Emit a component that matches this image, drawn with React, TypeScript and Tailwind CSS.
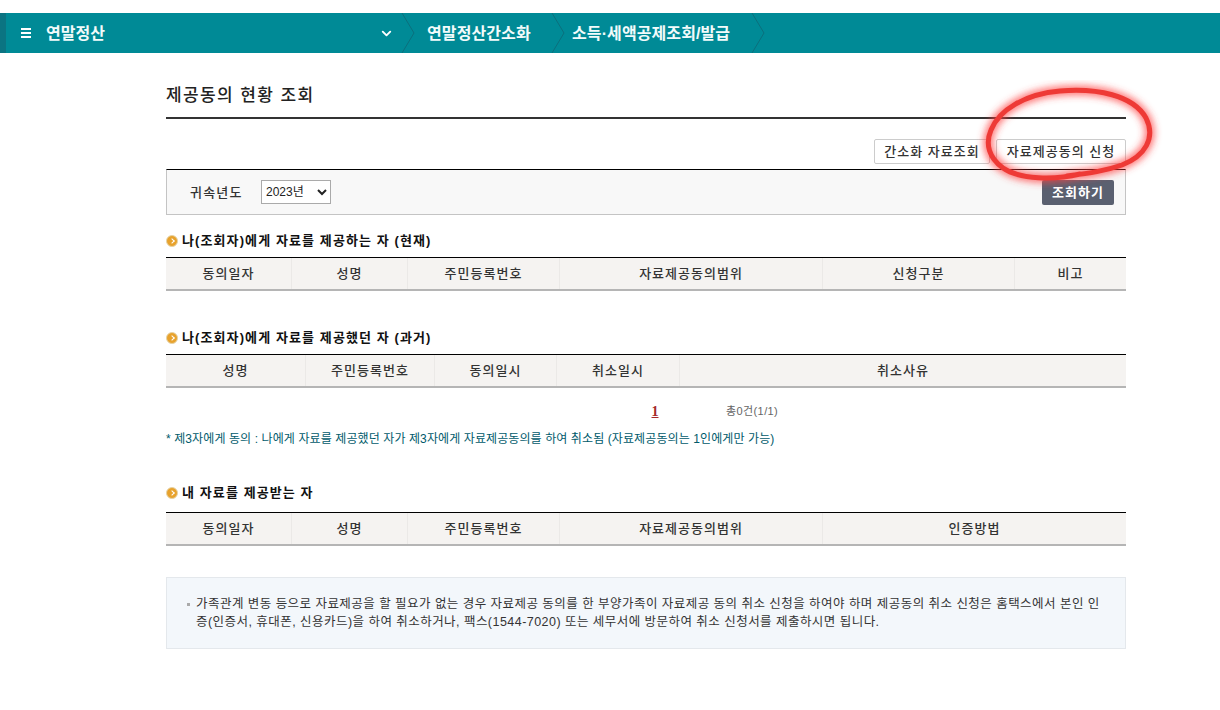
// App.tsx
// 제공동의 현황 조회 화면
import { ChevronDown } from "lucide-react";

const fontStack = "font-['Liberation_Sans','Noto_Sans_CJK_KR',sans-serif]";

// 제목 앞의 주황색 동그라미 + 제목
function SectionTitle({ text }: { text: string }) {
  return (
    <div className="flex items-center gap-[4px] h-[20px]">
      <span className="w-[12px] h-[12px] rounded-full bg-[#e8a22c] border border-[#e6d3a6] flex items-center justify-center">
        <span className="block w-[4px] h-[4px] border-t border-r border-white rotate-45 -ml-[1px]" />
      </span>
      <h3 className="text-[13px] font-bold text-[#111] tracking-[1.1px]">{text}</h3>
    </div>
  );
}

// 표 머리글만 있는 표
function HeadRow({ cols }: { cols: { label: string; width: string }[] }) {
  return (
    <div className="flex h-[34px] border-t border-t-black border-b-2 border-b-[#b5b5b5] bg-[#f5f3f1]">
      {cols.map((col, i) => (
        <div
          key={col.label}
          className={`${col.width} flex items-center justify-center pt-[1px] text-[13px] font-medium text-[#333] tracking-[1px] ${i > 0 ? "border-l border-l-[#ebe9e7]" : ""}`}
        >
          {col.label}
        </div>
      ))}
    </div>
  );
}

const presentCols = [
  { label: "동의일자", width: "w-[125px]" },
  { label: "성명", width: "w-[116px]" },
  { label: "주민등록번호", width: "w-[152px]" },
  { label: "자료제공동의범위", width: "w-[263px]" },
  { label: "신청구분", width: "w-[192px]" },
  { label: "비고", width: "flex-1" },
];

const pastCols = [
  { label: "성명", width: "w-[139px]" },
  { label: "주민등록번호", width: "w-[129px]" },
  { label: "동의일시", width: "w-[122px]" },
  { label: "취소일시", width: "w-[123px]" },
  { label: "취소사유", width: "flex-1" },
];

const receiverCols = [
  { label: "동의일자", width: "w-[125px]" },
  { label: "성명", width: "w-[116px]" },
  { label: "주민등록번호", width: "w-[152px]" },
  { label: "자료제공동의범위", width: "w-[263px]" },
  { label: "인증방법", width: "flex-1" },
];

function Crumb({ text, box }: { text: string; box: string }) {
  return (
    <div className={`${box} h-full flex items-center relative`}>
      <svg className="absolute left-[-1px] top-0 text-[#0b6f7c]" width="14" height="40" viewBox="0 0 14 40" fill="none">
        <path d="M1 0 L13 20 L1 40" stroke="currentColor" strokeWidth="1" />
      </svg>
      <span className="pt-[2px] text-[16px] font-bold text-[#f2fbfb] tracking-[0.1px]">{text}</span>
    </div>
  );
}

// 빨간 동그라미 선
const circlePath =
  "M105 94 C80 100 45 100 28 88 C14 78 10 64 16 50 C24 30 50 14 85 11 C122 8 158 15 171 38 C181 58 170 76 147 85 C130 91 115 93 92 96";

export default function App() {
  return (
    <div className={`w-[1220px] h-[710px] bg-white overflow-hidden relative pt-[13px] ${fontStack}`}>
      {/* 상단 메뉴 */}
      <div className="flex items-center h-[40px] bg-[#008a96] border-l-[6px] border-l-[#0b7482]">
        <div className="w-[396px] flex items-center h-full pl-[15px] text-white">
          <span className="flex flex-col gap-[2px] w-[10px]">
            <span className="h-[2px] bg-white" />
            <span className="h-[2px] bg-white" />
            <span className="h-[2px] bg-white" />
          </span>
          <span className="ml-[15px] pt-[2px] text-[16px] font-bold text-[#f2fbfb]">연말정산</span>
          <ChevronDown className="ml-auto mr-[8px]" size={15} strokeWidth={3} />
        </div>
        <Crumb text="연말정산간소화" box="w-[150px] pl-[25px]" />
        <Crumb text="소득·세액공제조회/발급" box="w-[200px] pl-[20px]" />
        <Crumb text="" box="w-[20px]" />
      </div>

      {/* 본문 */}
      <div className="ml-[166px] w-[960px]">
        <h2 className="h-[66px] pt-[29px] border-b-2 border-b-[#333] text-[17px] leading-[28px] font-medium text-[#222] tracking-[1.4px]">
          제공동의 현황 조회
        </h2>

        <div className="flex justify-end gap-[6px] mt-[20px]">
          <button className="w-[116px] h-[25px] pt-[1px] bg-white border border-[#ccc] rounded-[2px] text-[13px] font-medium text-[#333] tracking-[1px]">
            간소화 자료조회
          </button>
          <button className="w-[130px] h-[25px] pt-[1px] bg-white border border-[#ccc] rounded-[2px] text-[13px] font-medium text-[#333] tracking-[1px]">
            자료제공동의 신청
          </button>
        </div>

        {/* 조회 조건 */}
        <div className="flex items-center h-[46px] mt-[5px] border border-[#c4c4c4] border-t-black bg-[#f8f8f8] pl-[23px] pr-[11px]">
          <span className="pt-[1px] text-[13px] font-medium text-[#333] tracking-[1.2px] w-[71px]">귀속년도</span>
          <select className="w-[70px] h-[24px] bg-white border border-[#aaa] text-[12px] text-[#222]" defaultValue="2023년">
            <option>2023년</option>
          </select>
          <button className="ml-auto w-[72px] h-[25px] pt-[1px] bg-[#5a6070] rounded-[2px] text-[13px] font-bold text-white tracking-[1px]">
            조회하기
          </button>
        </div>

        <div className="mt-[16px]">
          <SectionTitle text="나(조회자)에게 자료를 제공하는 자 (현재)" />
        </div>
        <div className="mt-[6px]">
          <HeadRow cols={presentCols} />
        </div>

        <div className="mt-[37px]">
          <SectionTitle text="나(조회자)에게 자료를 제공했던 자 (과거)" />
        </div>
        <div className="mt-[6px]">
          <HeadRow cols={pastCols} />
        </div>

        {/* 페이지 번호 */}
        <div className="flex items-center h-[20px] mt-[13px]">
          <span className="ml-[484px] w-[10px] text-center font-['Liberation_Serif'] text-[14px] font-bold text-[#a52a2a] underline">1</span>
          <span className="ml-[66px] text-[11px] text-[#666] tracking-[0.4px]">총0건(1/1)</span>
        </div>

        <p className="mt-[10px] text-[12px] leading-[16px] text-[#005a6b] tracking-[0.1px]">
          * 제3자에게 동의 : 나에게 자료를 제공했던 자가 제3자에게 자료제공동의를 하여 취소됨 (자료제공동의는 1인에게만 가능)
        </p>

        <div className="mt-[36px]">
          <SectionTitle text="내 자료를 제공받는 자" />
        </div>
        <div className="mt-[9px]">
          <HeadRow cols={receiverCols} />
        </div>

        {/* 안내 문구 */}
        <div className="mt-[31px] h-[72px] bg-[#f3f7fb] border border-[#e4e8ec] pl-[20px] pr-[18px] pt-[17px] flex gap-[6px]">
          <span className="mt-[8px] w-[3px] h-[3px] shrink-0 bg-[#aaa]" />
          <p className="text-[12.5px] leading-[18px] text-[#333] tracking-[0.46px]">
            가족관계 변동 등으로 자료제공을 할 필요가 없는 경우 자료제공 동의를 한 부양가족이 자료제공 동의 취소 신청을 하여야 하며 제공동의 취소 신청은 홈택스에서 본인 인증(인증서, 휴대폰, 신용카드)을 하여 취소하거나, 팩스(1544-7020) 또는 세무서에 방문하여 취소 신청서를 제출하시면 됩니다.
          </p>
        </div>
      </div>

      {/* 빨간 동그라미 표시 (화면 위에 덧그림) */}
      <svg className="absolute left-[975px] top-[80px] pointer-events-none" width="190" height="115" viewBox="0 0 190 115" fill="none">
        <defs>
          <filter id="glow" x="-20%" y="-20%" width="140%" height="140%">
            <feGaussianBlur stdDeviation="3.5" />
          </filter>
        </defs>
        <path d={circlePath} stroke="#ff4040" strokeOpacity="0.7" strokeWidth="10" strokeLinecap="round" filter="url(#glow)" />
        <path d={circlePath} stroke="#ee3a36" strokeWidth="5" strokeLinecap="round" />
      </svg>
    </div>
  );
}
